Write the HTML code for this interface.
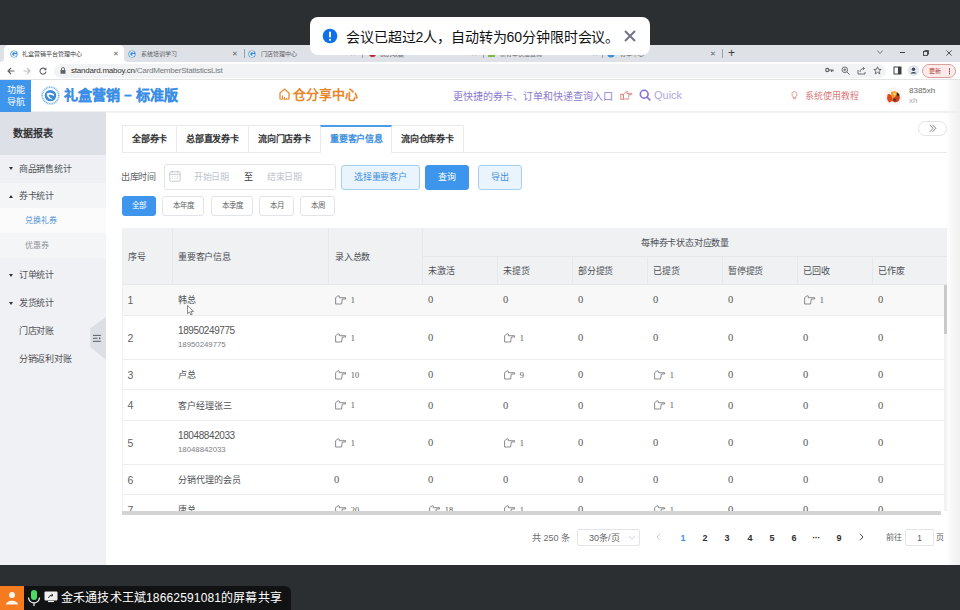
<!DOCTYPE html>
<html lang="zh-CN"><head><meta charset="utf-8">
<style>
*{margin:0;padding:0;box-sizing:border-box}
html,body{width:960px;height:610px;overflow:hidden;background:#fff;font-family:"Liberation Sans",sans-serif;color:#606266}
.a{position:absolute;white-space:nowrap}
#topbar{left:0;top:0;width:960px;height:45px;background:#2c2f32}
#tabstrip{left:0;top:45px;width:960px;height:17px;background:#dee1e6}
#toolbar{left:0;top:62px;width:960px;height:18px;background:#fff;border-bottom:1px solid #e3e3e3}
#omni{left:54px;top:64px;width:832px;height:14px;background:#f1f3f4;border-radius:7px}
.tt{font-size:6px;line-height:8px;color:#5f6368}
.cx{font-size:7px;line-height:10px;color:#5f6368}
.sep{top:49px;width:1px;height:9px;background:#9aa0a6}
.tri{width:0;height:0;border-left:2.3px solid transparent;border-right:2.3px solid transparent}
.sm{font-size:9px;line-height:12px;color:#505257;letter-spacing:-0.3px}
.tb{font-size:9px;line-height:12px;font-weight:700;color:#303133;letter-spacing:-0.2px}
.bl{height:25px;border:1px solid #a9cff0;background:#eaf4fd;color:#3f8fde;border-radius:3px;font-size:9px;line-height:23px;text-align:center;letter-spacing:-0.2px}
.bp{height:25px;border:1px solid #3d96ec;background:#3d96ec;color:#fff;border-radius:3px;font-size:9px;line-height:23px;text-align:center}
.qb{top:196px;height:20px;border:1px solid #e2e4e8;background:#fff;color:#606266;border-radius:3px;font-size:7.5px;line-height:18px;text-align:center}
.th{font-size:9px;line-height:12px;color:#4d4f55;letter-spacing:-0.2px}
.td{font-size:9px;line-height:12px;color:#4f5156}
.tds{font-size:7.8px;line-height:10px;color:#7d8086}
.num{font-family:"Liberation Serif",serif;font-size:10.5px;line-height:12px;color:#555}
.pg{top:532px;width:8px;text-align:center;font-size:9px;line-height:12px;font-weight:700;color:#303133}
</style></head><body>
<!-- ===== browser chrome ===== -->
<div class="a" id="topbar"></div>
<div class="a" id="tabstrip"></div>
<div class="a" style="left:4px;top:45px;width:120px;height:17px;background:#fff;border-radius:5px 5px 0 0"></div>
<div class="a" style="left:0;top:56px;width:4px;height:6px;background:#fff"></div>
<div class="a" style="left:0;top:56px;width:4px;height:6px;background:#dee1e6;border-radius:0 0 4px 0"></div>
<div class="a" style="left:124px;top:56px;width:4px;height:6px;background:#fff"></div>
<div class="a" style="left:124px;top:56px;width:4px;height:6px;background:#dee1e6;border-radius:0 0 0 4px"></div>
<!-- favicons -->
<svg class="a" style="left:10px;top:50px" width="8" height="8" viewBox="0 0 8 8"><circle cx="4" cy="4" r="3.6" fill="#3d8fd9"/><path d="M6 2.6A2.4 2.4 0 1 0 6.2 5L4.2 4.6" stroke="#fff" stroke-width="1.1" fill="none"/></svg>
<div class="a tt" style="left:22px;top:50px;color:#3c4043">礼盒营销平台管理中心</div>
<div class="a cx" style="left:113px;top:49px">✕</div>
<svg class="a" style="left:128px;top:50px" width="8" height="8" viewBox="0 0 8 8"><circle cx="4" cy="4" r="3.6" fill="#3d8fd9"/><path d="M6 2.6A2.4 2.4 0 1 0 6.2 5L4.2 4.6" stroke="#fff" stroke-width="1.1" fill="none"/></svg>
<div class="a tt" style="left:141px;top:50px">系统培训学习</div>
<div class="a cx" style="left:232px;top:49px">✕</div>
<div class="a sep" style="left:244px"></div>
<svg class="a" style="left:248px;top:50px" width="8" height="8" viewBox="0 0 8 8"><circle cx="4" cy="4" r="3.6" fill="#3d8fd9"/><path d="M6 2.6A2.4 2.4 0 1 0 6.2 5L4.2 4.6" stroke="#fff" stroke-width="1.1" fill="none"/></svg>
<div class="a tt" style="left:261px;top:50px">门店管理中心</div>
<div class="a cx" style="left:350px;top:49px">✕</div>
<div class="a sep" style="left:362px"></div>
<div class="a" style="left:369px;top:50px;width:7px;height:7px;border-radius:50%;background:#b3282d"></div>
<div class="a tt" style="left:380px;top:50px">我的收藏</div>
<div class="a cx" style="left:471px;top:49px">✕</div>
<div class="a sep" style="left:483px"></div>
<div class="a" style="left:488px;top:50px;width:7px;height:7px;background:#7cb84a"></div>
<div class="a tt" style="left:500px;top:50px">新订单快速查询</div>
<div class="a cx" style="left:592px;top:49px">✕</div>
<div class="a sep" style="left:602px"></div>
<svg class="a" style="left:607px;top:50px" width="8" height="8" viewBox="0 0 8 8"><circle cx="4" cy="4" r="3.6" fill="#3d8fd9"/></svg>
<div class="a tt" style="left:620px;top:50px">订单中心</div>
<div class="a cx" style="left:710px;top:49px">✕</div>
<div class="a sep" style="left:722px"></div>
<div class="a" style="left:728px;top:46px;font-size:12px;color:#3c4043;line-height:14px">+</div>
<!-- window controls -->
<svg class="a" style="left:876.5px;top:50px" width="6" height="4.5" viewBox="0 0 6 4.5"><path d="M0.4 0.5L3 3.6L5.6 0.5" stroke="#5f6368" stroke-width="0.8" fill="none"/></svg>
<div class="a" style="left:900px;top:52px;width:5px;height:1px;background:#3c4043"></div>
<svg class="a" style="left:922.5px;top:49.5px" width="6" height="6" viewBox="0 0 6 6"><rect x="0.5" y="1.5" width="4" height="4" stroke="#3c4043" fill="none" stroke-width="0.9"/><path d="M1.5 0.5H5.5V4.5" stroke="#3c4043" fill="none" stroke-width="0.9"/></svg>
<svg class="a" style="left:945.5px;top:49.5px" width="6" height="6" viewBox="0 0 6 6"><path d="M0.4 0.4L5.6 5.6M5.6 0.4L0.4 5.6" stroke="#3c4043" stroke-width="0.85"/></svg>

<div class="a" id="toolbar"></div>
<svg class="a" style="left:7px;top:67px" width="8" height="8" viewBox="0 0 8 8"><path d="M7.5 4H1M4 1L1 4L4 7" stroke="#5f6368" stroke-width="1.1" fill="none"/></svg>
<svg class="a" style="left:23px;top:67px" width="8" height="8" viewBox="0 0 8 8"><path d="M0.5 4H7M4 1L7 4L4 7" stroke="#bdc1c6" stroke-width="1.1" fill="none"/></svg>
<svg class="a" style="left:39px;top:67px" width="8" height="8" viewBox="0 0 8 8"><path d="M6.6 2.6A3 3 0 1 0 7 4.6" stroke="#5f6368" stroke-width="1.1" fill="none"/><path d="M7.4 0.6V3.3H4.7Z" fill="#5f6368"/></svg>
<div class="a" id="omni"></div>
<svg class="a" style="left:60px;top:67px" width="6" height="7" viewBox="0 0 6 7"><path d="M1.5 3V2A1.5 1.5 0 0 1 4.5 2V3" stroke="#5f6368" fill="none" stroke-width="0.9"/><rect x="0.5" y="3" width="5" height="3.8" rx="0.6" fill="#5f6368"/></svg>
<div class="a" style="left:71px;top:65px;font-size:8px;line-height:11px;letter-spacing:-0.22px;color:#333">standard.maboy.cn<span style="color:#75787c">/CardMemberStatisticsList</span></div>
<!-- right toolbar icons -->
<svg class="a" style="left:825px;top:67px" width="9" height="7" viewBox="0 0 9 7"><circle cx="2.3" cy="3" r="1.6" stroke="#5f6368" stroke-width="1.2" fill="none"/><path d="M3.8 3H8.5M6.5 3V5M8 3V4.5" stroke="#5f6368" stroke-width="1.1"/></svg>
<svg class="a" style="left:841px;top:66px" width="9" height="9" viewBox="0 0 9 9"><circle cx="3.8" cy="3.8" r="2.8" stroke="#5f6368" stroke-width="0.9" fill="none"/><path d="M5.9 5.9L8.5 8.5M2.4 3.8H5.2M3.8 2.4V5.2" stroke="#5f6368" stroke-width="0.9"/></svg>
<svg class="a" style="left:857px;top:66px" width="9" height="9" viewBox="0 0 9 9"><path d="M1 4V8H8V6" stroke="#5f6368" stroke-width="0.9" fill="none"/><path d="M3 6C3 3.5 4.5 2.5 7 2.5M5.8 1L7.5 2.5L5.8 4" stroke="#5f6368" stroke-width="0.9" fill="none"/></svg>
<svg class="a" style="left:873px;top:66px" width="9" height="9" viewBox="0 0 9 9"><path d="M4.5 0.8L5.5 3.3L8.2 3.5L6.1 5.2L6.8 7.9L4.5 6.4L2.2 7.9L2.9 5.2L0.8 3.5L3.5 3.3Z" stroke="#5f6368" stroke-width="0.9" fill="none" stroke-linejoin="round"/></svg>
<svg class="a" style="left:893px;top:66px" width="9" height="9" viewBox="0 0 9 9"><rect x="1" y="1" width="7" height="7" stroke="#3c4043" stroke-width="1" fill="none"/><rect x="5" y="1" width="3" height="7" fill="#3c4043"/></svg>
<div class="a" style="left:908px;top:65px;width:11px;height:11px;border-radius:50%;background:#e3e6eb"></div>
<svg class="a" style="left:908px;top:65px" width="11" height="11" viewBox="0 0 11 11"><circle cx="5.5" cy="4.2" r="1.7" fill="#3c4a5c"/><path d="M2.6 8.6C3.2 6.6 7.8 6.6 8.4 8.6Z" fill="#3c4a5c"/></svg>
<div class="a" style="left:922px;top:64px;width:34px;height:14px;border-radius:7px;border:1px solid #d7a19f;background:#fcebea"></div>
<div class="a" style="left:929px;top:66px;font-size:6px;line-height:10px;color:#b0413b">更新</div>
<div class="a" style="left:948.5px;top:68px;width:1.5px;height:1.5px;border-radius:1px;background:#8d4b47;box-shadow:0 2.3px 0 #8d4b47,0 4.6px 0 #8d4b47"></div>
<!-- ===== app header ===== -->
<div class="a" style="left:0;top:80px;width:960px;height:32px;background:#fff;border-bottom:1px solid #eef0f3"></div>
<div class="a" style="left:0;top:80px;width:31px;height:32px;background:#3d95ec"></div>
<div class="a" style="left:7px;top:84px;font-size:9px;line-height:12px;color:#fff;white-space:normal;width:20px">功能<br>导航</div>
<svg class="a" style="left:41px;top:86px" width="19" height="19" viewBox="0 0 19 19">
<circle cx="9.5" cy="9.5" r="8.3" fill="#fff" stroke="#6fb0ec" stroke-width="1.8" stroke-dasharray="1 0.7"/>
<circle cx="9.5" cy="9.5" r="9.2" fill="none" stroke="#d5e8fa" stroke-width="0.5"/>
<circle cx="9.5" cy="9.6" r="5.7" fill="#3b8ad9"/>
<path d="M5.6 7.8C7.5 6.2 10.8 6.4 13.2 8.6L12.6 10C11 8.8 9 8.6 7.6 9.2C8.5 11 10.2 12.4 11.6 13.2C9.3 13.9 6.2 12.2 5.6 7.8Z" fill="#fff"/>
<path d="M8.6 10.6L10 12.2L10.6 10.4Z" fill="#3b8ad9"/>
</svg>
<div class="a" style="left:64px;top:86px;font-size:14px;line-height:19px;font-weight:700;color:#3a8ee6;-webkit-text-stroke:0.2px #3a8ee6">礼盒营销 – 标准版</div>
<svg class="a" style="left:279px;top:88px" width="11" height="12" viewBox="0 0 11 12"><path d="M1 11.2V5L5.5 1L10 5V11.2" stroke="#e8892c" stroke-width="1.3" fill="none"/><path d="M3.5 11V7.5M5.5 11V9M7.5 11V10" stroke="#e8892c" stroke-width="1.1"/><path d="M1 11.3H10" stroke="#e8892c" stroke-width="0.8"/></svg>
<div class="a" style="left:293px;top:86px;font-size:13px;line-height:17px;font-weight:700;color:#e8862a">仓分享中心</div>
<div class="a" style="left:453px;top:90px;font-size:10px;line-height:13px;color:#8c7bd0">更快捷的券卡、订单和快递查询入口</div>
<svg class="a" style="left:620px;top:90px" width="13" height="10" viewBox="0 0 13 10"><path d="M1 4.5H3.5L6.5 1.2C7.3 0.8 7.8 1.3 7.4 2L6.6 3.3H11.5C12.3 3.3 12.3 4.6 11.5 4.6H8.5M3.5 4.5V9H8.5C9.3 9 9.3 7.8 8.5 7.8M8.5 4.6C9.3 4.6 9.3 5.9 8.5 5.9H8.2C9 5.9 9 7.1 8.2 7.1" stroke="#d9827a" stroke-width="0.9" fill="none" stroke-linejoin="round"/><rect x="0.8" y="4.3" width="2.5" height="5" stroke="#d9827a" stroke-width="0.9" fill="none"/></svg>
<svg class="a" style="left:639px;top:89px" width="12" height="12" viewBox="0 0 12 12"><circle cx="5.2" cy="5.2" r="3.9" stroke="#8c6fd8" stroke-width="1.6" fill="none"/><path d="M8 8L10.8 10.8" stroke="#8c6fd8" stroke-width="1.7" stroke-linecap="round"/></svg>
<div class="a" style="left:654px;top:88px;font-size:11px;line-height:15px;color:#b3a6e4">Quick</div>
<svg class="a" style="left:791px;top:91px" width="7" height="9" viewBox="0 0 7 9"><path d="M3.5 0.7A2.6 2.6 0 0 0 2 5.4V6.6H5V5.4A2.6 2.6 0 0 0 3.5 0.7Z" stroke="#e07f80" stroke-width="0.8" fill="none"/><path d="M2.2 7.8H4.8" stroke="#e07f80" stroke-width="0.8"/></svg>
<div class="a" style="left:805px;top:90px;font-size:9px;line-height:12px;color:#d9777a">系统使用教程</div>
<svg class="a" style="left:884px;top:87px" width="19" height="19" viewBox="0 0 19 19">
<circle cx="9.5" cy="9.5" r="9.3" fill="#f8f4f0"/>
<path d="M3.5 7.5C4.5 6.5 6 7 7 8L9 11L7.5 14.5L5 15.5L3 12Z" fill="#e0481c"/>
<path d="M7 5C9 3.8 12 3.8 13.5 5.5L12.5 9.5L9 11L7 8Z" fill="#f39a2a"/>
<path d="M13 5.5C14.5 6 15.5 7 15.5 8.5L14 9.5L12.5 9Z" fill="#3a1c10"/>
<path d="M9 11L12.5 9L15.5 8.5C16.2 10.5 15.8 13 14 14.5L11 15.5L8 14Z" fill="#c8421c"/>
<path d="M8.5 12.5L10.5 14L12.5 13L11 11.5Z" fill="#5a2a16"/>
<circle cx="10.5" cy="7" r="1.3" fill="#ffd27a"/>
</svg>
<div class="a" style="left:909px;top:86px;font-size:8px;line-height:10px;color:#666">8385xh</div>
<div class="a" style="left:909px;top:96px;font-size:8px;line-height:10px;color:#aaa">xh</div>
<!-- ===== sidebar ===== -->
<div class="a" style="left:0;top:112px;width:106px;height:453px;background:#f0f1f4"></div>
<div class="a" style="left:0;top:112px;width:106px;height:43px;background:#dde0e7"></div>
<div class="a" style="left:13px;top:127px;font-size:10px;line-height:13px;font-weight:700;color:#303133">数据报表</div>
<div class="a" style="left:0;top:155px;width:106px;height:28px;background:#eef0f3"></div>
<div class="a tri" style="left:9px;top:167px;border-top:3.5px solid #303133"></div>
<div class="a sm" style="left:19px;top:163px">商品销售统计</div>
<div class="a" style="left:0;top:183px;width:106px;height:25px;background:#f4f5f7"></div>
<div class="a tri" style="left:9px;top:195px;border-bottom:3.5px solid #303133"></div>
<div class="a sm" style="left:19px;top:190px">券卡统计</div>
<div class="a" style="left:0;top:208px;width:106px;height:25px;background:#fbfbfc"></div>
<div class="a" style="left:25px;top:216px;font-size:8px;line-height:10px;color:#4a8fd6">兑换礼券</div>
<div class="a" style="left:0;top:233px;width:106px;height:25px;background:#f4f5f7"></div>
<div class="a" style="left:25px;top:241px;font-size:8px;line-height:10px;color:#909399">优惠券</div>
<div class="a tri" style="left:9px;top:274px;border-top:3.5px solid #303133"></div>
<div class="a sm" style="left:19px;top:269px">订单统计</div>
<div class="a tri" style="left:9px;top:302px;border-top:3.5px solid #303133"></div>
<div class="a sm" style="left:19px;top:297px">发货统计</div>
<div class="a sm" style="left:19px;top:325px">门店对账</div>
<div class="a sm" style="left:19px;top:353px">分销返利对账</div>
<svg class="a" style="left:88px;top:317px" width="18" height="44" viewBox="0 0 18 44"><path d="M18 0V43L2.3 30V11.2Z" fill="#dcdfe5"/><path d="M5 18.4H12.8M5 21.3H9.5M5 24.3H12.8" stroke="#4a4d52" stroke-width="0.9" fill="none"/><path d="M11 20.2L12.8 21.3L11 22.4Z" fill="#4a4d52"/></svg>
<!-- ===== main ===== -->
<div class="a" style="left:106px;top:112px;width:854px;height:453px;background:#fff"></div>
<div class="a" style="left:107px;top:112px;width:853px;height:1px;background:#f1f2f4"></div>
<!-- tabs -->
<div class="a" style="left:122px;top:125px;width:342px;height:28px;border:1px solid #e8eaee;border-bottom:none"></div>
<div class="a" style="left:122px;top:152px;width:825px;height:1px;background:#e8eaee"></div>
<div class="a" style="left:176px;top:125px;width:1px;height:27px;background:#e8eaee"></div>
<div class="a" style="left:248px;top:125px;width:1px;height:27px;background:#e8eaee"></div>
<div class="a" style="left:320px;top:125px;width:72px;height:28px;background:#fff;border-left:1px solid #e8eaee;border-right:1px solid #e8eaee;border-top:2px solid #4a9be8"></div>
<div class="a tb" style="left:132px;top:133px">全部券卡</div>
<div class="a tb" style="left:186px;top:133px">总部直发券卡</div>
<div class="a tb" style="left:258px;top:133px">流向门店券卡</div>
<div class="a tb" style="left:330px;top:133px;color:#3d8fe0">重要客户信息</div>
<div class="a tb" style="left:401px;top:133px">流向仓库券卡</div>
<div class="a" style="left:918px;top:121px;width:29px;height:15px;border:1px solid #e3e3e5;border-radius:7.5px"></div>
<svg class="a" style="left:929px;top:124px" width="8" height="9" viewBox="0 0 8 9"><path d="M0.8 0.8L4 4.3L0.8 7.8M3.6 0.8L6.8 4.3L3.6 7.8" stroke="#5a5a5a" stroke-width="0.75" fill="none"/></svg>
<!-- filter row -->
<div class="a" style="left:121px;top:171px;font-size:9px;line-height:12px;color:#606266;letter-spacing:-0.3px">出库时间</div>
<div class="a" style="left:164px;top:164px;width:172px;height:25.5px;border:1px solid #e2e4e8;border-radius:3px"></div>
<svg class="a" style="left:169px;top:170px" width="12" height="12" viewBox="0 0 12 12"><rect x="0.8" y="1.8" width="10.4" height="9.4" rx="1" stroke="#c0c4cc" stroke-width="0.9" fill="none"/><path d="M0.8 4.3H11.2M3.3 0.5V2.8M8.7 0.5V2.8" stroke="#c0c4cc" stroke-width="0.9"/><path d="M3 6.3H4M5.5 6.3H6.5M8 6.3H9M3 8.5H4M5.5 8.5H6.5M8 8.5H9" stroke="#c0c4cc" stroke-width="0.8"/></svg>
<div class="a" style="left:194px;top:171px;font-size:9px;line-height:12px;color:#c0c4cc;letter-spacing:-0.3px">开始日期</div>
<div class="a" style="left:244px;top:171px;font-size:9px;line-height:12px;color:#303133">至</div>
<div class="a" style="left:267px;top:171px;font-size:9px;line-height:12px;color:#c0c4cc;letter-spacing:-0.3px">结束日期</div>
<div class="a bl" style="left:341px;top:165px;width:79px">选择重要客户</div>
<div class="a bp" style="left:425px;top:165px;width:44px">查询</div>
<div class="a bl" style="left:478px;top:165px;width:44px">导出</div>
<!-- quick dates -->
<div class="a qb" style="left:122px;width:34px;background:#3d96ec;border-color:#3d96ec;color:#fff">全部</div>
<div class="a qb" style="left:162px;width:42px">本年度</div>
<div class="a qb" style="left:211px;width:42px">本季度</div>
<div class="a qb" style="left:259px;width:35px">本月</div>
<div class="a qb" style="left:300px;width:35px">本周</div>
<svg width="0" height="0" style="position:absolute"><defs><g id="hand"><path d="M0.6 2.7L3.2 0.7L4.3 1.1V2.7H10.6V4H7.3L6.6 9H0.6Z" stroke="#777" stroke-width="0.85" fill="none" stroke-linejoin="miter"/></g></defs></svg>
<!-- ===== table ===== -->
<div class="a" style="left:122px;top:228px;width:825px;height:287px;overflow:hidden" id="tbl">
<div class="a" style="left:0px;top:0px;width:825px;height:56px;background:#eff1f3"></div>
<div class="a" style="left:0px;top:56px;width:825px;height:31px;background:#f8f8f8"></div>
<div class="a" style="left:300px;top:28px;width:525px;height:1px;background:#e6e8eb"></div>
<div class="a" style="left:0px;top:56px;width:825px;height:1px;background:#e6e8eb"></div>
<div class="a" style="left:50px;top:0px;width:1px;height:56px;background:#e6e8eb"></div>
<div class="a" style="left:206px;top:0px;width:1px;height:56px;background:#e6e8eb"></div>
<div class="a" style="left:300px;top:0px;width:1px;height:56px;background:#e6e8eb"></div>
<div class="a" style="left:375px;top:28px;width:1px;height:28px;background:#e6e8eb"></div>
<div class="a" style="left:450px;top:28px;width:1px;height:28px;background:#e6e8eb"></div>
<div class="a" style="left:525px;top:28px;width:1px;height:28px;background:#e6e8eb"></div>
<div class="a" style="left:600px;top:28px;width:1px;height:28px;background:#e6e8eb"></div>
<div class="a" style="left:675px;top:28px;width:1px;height:28px;background:#e6e8eb"></div>
<div class="a" style="left:750px;top:28px;width:1px;height:28px;background:#e6e8eb"></div>
<div class="a" style="left:0px;top:87px;width:822px;height:1px;background:#ecedf0"></div>
<div class="a" style="left:0px;top:131px;width:822px;height:1px;background:#ecedf0"></div>
<div class="a" style="left:0px;top:161px;width:822px;height:1px;background:#ecedf0"></div>
<div class="a" style="left:0px;top:192px;width:822px;height:1px;background:#ecedf0"></div>
<div class="a" style="left:0px;top:236px;width:822px;height:1px;background:#ecedf0"></div>
<div class="a" style="left:0px;top:266px;width:822px;height:1px;background:#ecedf0"></div>
<div class="a" style="left:0px;top:56px;width:1px;height:227px;background:#eef0f4"></div>
<div class="a" style="left:822px;top:57px;width:3px;height:226px;background:#f3f3f3"></div>
<div class="a th" style="left:6px;top:23px;">序号</div>
<div class="a th" style="left:56px;top:23px;">重要客户信息</div>
<div class="a th" style="left:213px;top:23px;">录入总数</div>
<div class="a th" style="left:519px;top:9px;">每种券卡状态对应数量</div>
<div class="a th" style="left:306px;top:37px;">未激活</div>
<div class="a th" style="left:381px;top:37px;">未提货</div>
<div class="a th" style="left:456px;top:37px;">部分提货</div>
<div class="a th" style="left:531px;top:37px;">已提货</div>
<div class="a th" style="left:606px;top:37px;">暂停提货</div>
<div class="a th" style="left:681px;top:37px;">已回收</div>
<div class="a th" style="left:756px;top:37px;">已作废</div>
<div class="a td" style="left:5.5px;top:65.5px;font-size:10.5px;line-height:13px;color:#606266">1</div>
<div class="a td" style="left:56px;top:66.0px;">韩总</div>
<svg class="a" style="left:213px;top:66.5px" width="12" height="10" viewBox="0 0 12 10"><use href="#hand"/></svg>
<div class="a num" style="left:228.8px;top:66.5px;font-size:8.3px">1</div>
<div class="a num" style="left:306px;top:66.0px;">0</div>
<div class="a num" style="left:381px;top:66.0px;">0</div>
<div class="a num" style="left:456px;top:66.0px;">0</div>
<div class="a num" style="left:531px;top:66.0px;">0</div>
<div class="a num" style="left:606px;top:66.0px;">0</div>
<svg class="a" style="left:682px;top:66.5px" width="12" height="10" viewBox="0 0 12 10"><use href="#hand"/></svg>
<div class="a num" style="left:697.8px;top:66.5px;font-size:8.3px">1</div>
<div class="a num" style="left:756px;top:66.0px;">0</div>
<div class="a td" style="left:5.5px;top:103.5px;font-size:10.5px;line-height:13px;color:#606266">2</div>
<div class="a td" style="left:56px;top:95.5px;font-size:10px;line-height:13px;letter-spacing:-0.4px;color:#555">18950249775</div>
<div class="a tds" style="left:56px;top:112.0px;">18950249775</div>
<svg class="a" style="left:213px;top:104.5px" width="12" height="10" viewBox="0 0 12 10"><use href="#hand"/></svg>
<div class="a num" style="left:228.8px;top:104.5px;font-size:8.3px">1</div>
<div class="a num" style="left:306px;top:104.0px;">0</div>
<svg class="a" style="left:382px;top:104.5px" width="12" height="10" viewBox="0 0 12 10"><use href="#hand"/></svg>
<div class="a num" style="left:397.79999999999995px;top:104.5px;font-size:8.3px">1</div>
<div class="a num" style="left:456px;top:104.0px;">0</div>
<div class="a num" style="left:531px;top:104.0px;">0</div>
<div class="a num" style="left:606px;top:104.0px;">0</div>
<div class="a num" style="left:681px;top:104.0px;">0</div>
<div class="a num" style="left:756px;top:104.0px;">0</div>
<div class="a td" style="left:5.5px;top:140.5px;font-size:10.5px;line-height:13px;color:#606266">3</div>
<div class="a td" style="left:56px;top:141.0px;">卢总</div>
<svg class="a" style="left:213px;top:141.5px" width="12" height="10" viewBox="0 0 12 10"><use href="#hand"/></svg>
<div class="a num" style="left:228.8px;top:141.5px;font-size:8.3px">10</div>
<div class="a num" style="left:306px;top:141.0px;">0</div>
<svg class="a" style="left:382px;top:141.5px" width="12" height="10" viewBox="0 0 12 10"><use href="#hand"/></svg>
<div class="a num" style="left:397.79999999999995px;top:141.5px;font-size:8.3px">9</div>
<div class="a num" style="left:456px;top:141.0px;">0</div>
<svg class="a" style="left:532px;top:141.5px" width="12" height="10" viewBox="0 0 12 10"><use href="#hand"/></svg>
<div class="a num" style="left:547.8px;top:141.5px;font-size:8.3px">1</div>
<div class="a num" style="left:606px;top:141.0px;">0</div>
<div class="a num" style="left:681px;top:141.0px;">0</div>
<div class="a num" style="left:756px;top:141.0px;">0</div>
<div class="a td" style="left:5.5px;top:171.0px;font-size:10.5px;line-height:13px;color:#606266">4</div>
<div class="a td" style="left:56px;top:171.5px;">客户经理张三</div>
<svg class="a" style="left:213px;top:172.0px" width="12" height="10" viewBox="0 0 12 10"><use href="#hand"/></svg>
<div class="a num" style="left:228.8px;top:172.0px;font-size:8.3px">1</div>
<div class="a num" style="left:306px;top:171.5px;">0</div>
<div class="a num" style="left:381px;top:171.5px;">0</div>
<div class="a num" style="left:456px;top:171.5px;">0</div>
<svg class="a" style="left:532px;top:172.0px" width="12" height="10" viewBox="0 0 12 10"><use href="#hand"/></svg>
<div class="a num" style="left:547.8px;top:172.0px;font-size:8.3px">1</div>
<div class="a num" style="left:606px;top:171.5px;">0</div>
<div class="a num" style="left:681px;top:171.5px;">0</div>
<div class="a num" style="left:756px;top:171.5px;">0</div>
<div class="a td" style="left:5.5px;top:208.5px;font-size:10.5px;line-height:13px;color:#606266">5</div>
<div class="a td" style="left:56px;top:200.5px;font-size:10px;line-height:13px;letter-spacing:-0.4px;color:#555">18048842033</div>
<div class="a tds" style="left:56px;top:217.0px;">18048842033</div>
<svg class="a" style="left:213px;top:209.5px" width="12" height="10" viewBox="0 0 12 10"><use href="#hand"/></svg>
<div class="a num" style="left:228.8px;top:209.5px;font-size:8.3px">1</div>
<div class="a num" style="left:306px;top:209.0px;">0</div>
<svg class="a" style="left:382px;top:209.5px" width="12" height="10" viewBox="0 0 12 10"><use href="#hand"/></svg>
<div class="a num" style="left:397.79999999999995px;top:209.5px;font-size:8.3px">1</div>
<div class="a num" style="left:456px;top:209.0px;">0</div>
<div class="a num" style="left:531px;top:209.0px;">0</div>
<div class="a num" style="left:606px;top:209.0px;">0</div>
<div class="a num" style="left:681px;top:209.0px;">0</div>
<div class="a num" style="left:756px;top:209.0px;">0</div>
<div class="a td" style="left:5.5px;top:245.5px;font-size:10.5px;line-height:13px;color:#606266">6</div>
<div class="a td" style="left:56px;top:246.0px;">分销代理的会员</div>
<div class="a num" style="left:212px;top:246.0px;">0</div>
<div class="a num" style="left:306px;top:246.0px;">0</div>
<div class="a num" style="left:381px;top:246.0px;">0</div>
<div class="a num" style="left:456px;top:246.0px;">0</div>
<div class="a num" style="left:531px;top:246.0px;">0</div>
<div class="a num" style="left:606px;top:246.0px;">0</div>
<div class="a num" style="left:681px;top:246.0px;">0</div>
<div class="a num" style="left:756px;top:246.0px;">0</div>
<div class="a td" style="left:5.5px;top:275.5px;font-size:10.5px;line-height:13px;color:#606266">7</div>
<div class="a td" style="left:56px;top:276px;">唐总</div>
<svg class="a" style="left:213px;top:276.5px" width="12" height="10" viewBox="0 0 12 10"><use href="#hand"/></svg>
<div class="a num" style="left:228.8px;top:276.5px;font-size:8.3px">20</div>
<svg class="a" style="left:307px;top:276.5px" width="12" height="10" viewBox="0 0 12 10"><use href="#hand"/></svg>
<div class="a num" style="left:322.8px;top:276.5px;font-size:8.3px">18</div>
<svg class="a" style="left:382px;top:276.5px" width="12" height="10" viewBox="0 0 12 10"><use href="#hand"/></svg>
<div class="a num" style="left:397.79999999999995px;top:276.5px;font-size:8.3px">1</div>
<div class="a num" style="left:456px;top:276px;">0</div>
<svg class="a" style="left:532px;top:276.5px" width="12" height="10" viewBox="0 0 12 10"><use href="#hand"/></svg>
<div class="a num" style="left:547.8px;top:276.5px;font-size:8.3px">1</div>
<div class="a num" style="left:606px;top:276px;">0</div>
<div class="a num" style="left:681px;top:276px;">0</div>
<div class="a num" style="left:756px;top:276px;">0</div>
<div class="a" style="left:0px;top:283px;width:819px;height:4px;background:#d4d4d4"></div>
<div class="a" style="left:821.5px;top:57px;width:3px;height:49px;background:#c9c9c9"></div>
</div>
<!-- ===== pagination ===== -->
<div class="a" style="left:532px;top:532px;font-size:9px;line-height:12px;color:#6a6c70">共 250 条</div>
<div class="a" style="left:577px;top:529px;width:63px;height:17px;border:1px solid #e2e4e8;border-radius:2px"></div>
<div class="a" style="left:589px;top:532px;font-size:9px;line-height:12px;color:#606266">30条/页</div>
<svg class="a" style="left:628px;top:535px" width="8" height="5" viewBox="0 0 8 5"><path d="M0.8 0.8L4 4L7.2 0.8" stroke="#c0c4cc" stroke-width="0.8" fill="none"/></svg>
<svg class="a" style="left:656px;top:533px" width="5" height="8" viewBox="0 0 5 8"><path d="M4 0.8L1 4L4 7.2" stroke="#c0c4cc" stroke-width="0.9" fill="none"/></svg>
<div class="a pg" style="left:679px;color:#3f8fdc">1</div>
<div class="a pg" style="left:701px">2</div>
<div class="a pg" style="left:723px">3</div>
<div class="a pg" style="left:746px">4</div>
<div class="a pg" style="left:768px">5</div>
<div class="a pg" style="left:790px">6</div>
<div class="a pg" style="left:812px;letter-spacing:-0.5px">···</div>
<div class="a pg" style="left:835px">9</div>
<svg class="a" style="left:859px;top:533px" width="5" height="8" viewBox="0 0 5 8"><path d="M1 0.8L4 4L1 7.2" stroke="#303133" stroke-width="0.9" fill="none"/></svg>
<div class="a" style="left:886px;top:532px;font-size:8px;line-height:12px;color:#606266">前往</div>
<div class="a" style="left:905px;top:529px;width:29px;height:17px;border:1px solid #e2e4e8;border-radius:2px"></div>
<div class="a" style="left:905px;top:532px;width:29px;text-align:center;font-size:9px;line-height:12px;color:#606266">1</div>
<div class="a" style="left:936px;top:532px;font-size:8px;line-height:12px;color:#606266">页</div>
<!-- right edge shade -->
<div class="a" style="left:946px;top:80px;width:14px;height:485px;background:linear-gradient(to right,rgba(240,240,240,0),rgba(240,240,240,0.6) 50%,#f0f0f0)"></div>
<!-- ===== bottom bar ===== -->
<div class="a" style="left:0;top:565px;width:960px;height:45px;background:#2c2f32"></div>
<div class="a" style="left:0;top:586px;width:291px;height:24px;background:#111213;border-radius:0 6px 0 0"></div>
<div class="a" style="left:0;top:586px;width:24px;height:24px;background:#f47b20"></div>
<svg class="a" style="left:4px;top:590px" width="16" height="16" viewBox="0 0 16 16"><circle cx="8" cy="5" r="3" fill="#fff4e8"/><path d="M2 14.5C2.5 9.5 13.5 9.5 14 14.5Z" fill="#fff4e8"/></svg>
<svg class="a" style="left:27px;top:589px" width="14" height="18" viewBox="0 0 14 18"><rect x="4" y="1" width="6" height="10" rx="3" fill="#4cd964"/><path d="M1.5 8.5A5.5 5.5 0 0 0 12.5 8.5M7 14V17" stroke="#e8e8e8" stroke-width="1.3" fill="none"/></svg>
<svg class="a" style="left:44px;top:591px" width="14" height="13" viewBox="0 0 14 13"><rect x="0.5" y="0.5" width="13" height="9" rx="1" fill="#f0f0f0"/><path d="M4 10.5H10" stroke="#f0f0f0" stroke-width="1.2"/><path d="M4.5 7C5 5 6.5 4.2 8.5 4.2M7.5 3L9 4.2L7.5 5.4" stroke="#222" stroke-width="1" fill="none"/></svg>
<div class="a" style="left:61px;top:590px;font-size:12px;line-height:16px;letter-spacing:0.15px;color:#fff">金禾通技术王斌18662591081的屏幕共享</div>
<!-- ===== toast ===== -->
<div class="a" style="left:310px;top:17px;width:340px;height:38px;background:#fff;border-radius:8px"></div>
<svg class="a" style="left:322px;top:28px" width="16" height="16" viewBox="0 0 16 16"><circle cx="8" cy="8" r="7.3" fill="#0e71eb"/><rect x="7" y="3.5" width="2" height="6" rx="1" fill="#fff"/><circle cx="8" cy="11.8" r="1.1" fill="#fff"/></svg>
<div class="a" style="left:346px;top:28px;font-size:14px;line-height:18px;letter-spacing:-0.1px;color:#111;font-weight:500">会议已超过2人，自动转为60分钟限时会议。</div>
<svg class="a" style="left:624px;top:30px" width="12" height="12" viewBox="0 0 12 12"><path d="M1 1L11 11M11 1L1 11" stroke="#747487" stroke-width="2"/></svg>
<svg class="a" style="left:186.5px;top:304.5px" width="8" height="11" viewBox="0 0 8 11"><path d="M0.5 0.5V8.6L2.4 6.9L3.8 9.9L5.2 9.3L3.9 6.4H6.5Z" fill="#fff" stroke="#555" stroke-width="0.7" stroke-linejoin="round"/></svg>
</body></html>
